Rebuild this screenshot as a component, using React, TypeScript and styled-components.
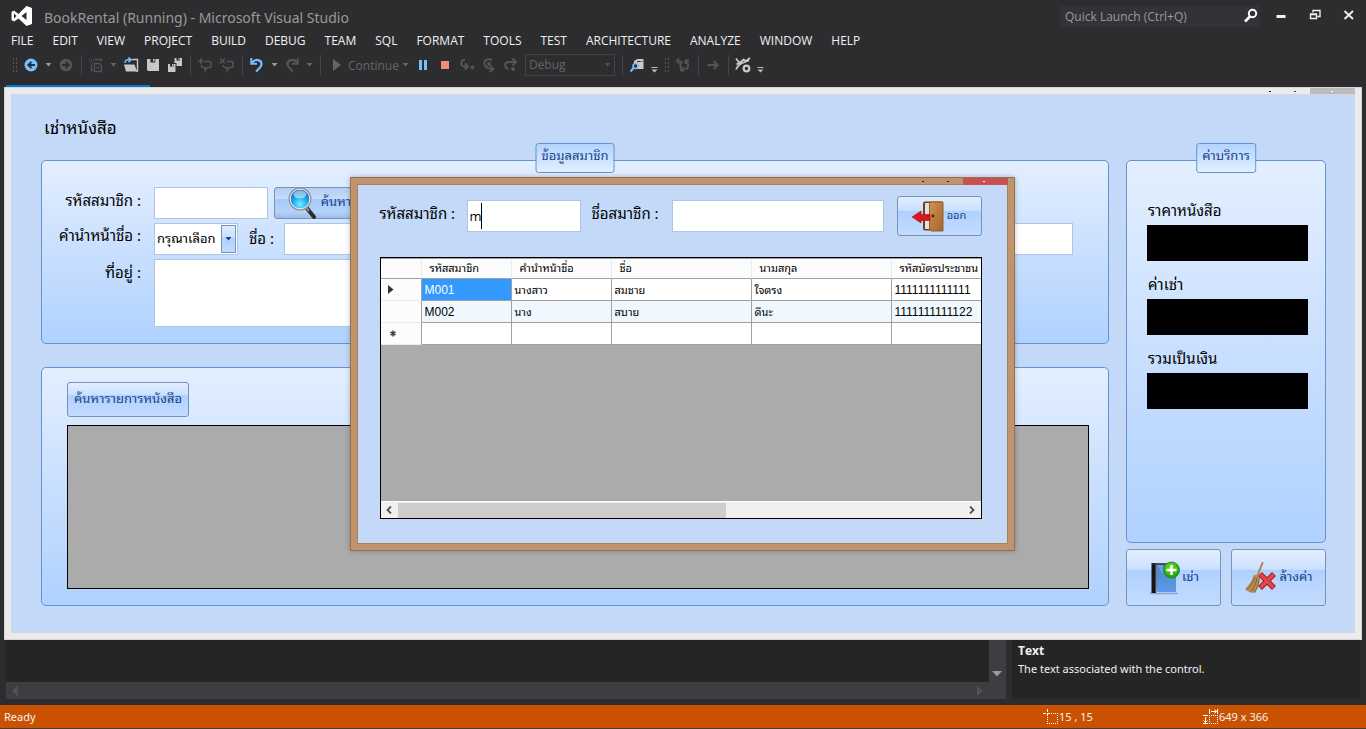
import React from 'react';
import styled, { createGlobalStyle, css } from 'styled-components';

const UI = '"Open Sans", "Noto Sans", sans-serif';
const UI_WIDE = '"Noto Sans", "Open Sans", sans-serif';
const THAI = '"Noto Sans Thai Looped", "Noto Sans Thai", "Loma", "Liberation Sans", sans-serif';
const NARROW = '"Liberation Sans Narrow", "Liberation Sans", sans-serif';

const GlobalStyle = createGlobalStyle`
  * { box-sizing: border-box; }
  body { margin: 0; background: #2d2d30; font-family: ${UI}; }
  button, input, select, textarea { font: inherit; margin: 0; }
`;

/* ---------- IDE shell ---------- */

const Shell = styled.div`
  display: flex;
  flex-direction: column;
  min-height: 100vh;
  background: #2d2d30;
  color: #f1f1f1;
  overflow: hidden;
`;

const TitleBar = styled.header`
  display: flex;
  align-items: center;
  height: 32px;
  padding: 0 9px 0 11px;
  gap: 12px;
`;

const AppTitle = styled.h1`
  flex: 1;
  margin: 0;
  padding-top: 3px;
  font-family: ${UI_WIDE};
  font-size: 14px;
  font-weight: 400;
  line-height: 20px;
  color: #999;
  white-space: nowrap;
`;

const QuickLaunch = styled.label`
  display: flex;
  align-items: center;
  width: 200px;
  height: 21px;
  padding: 0 1px 0 5px;
  background: #333337;
`;

const QuickInput = styled.input`
  flex: 1;
  min-width: 0;
  padding: 0;
  border: 0;
  outline: 0;
  background: transparent;
  font-size: 12px;
  color: #999;
  &::placeholder { color: #999; opacity: 1; }
`;

const CaptionButtons = styled.div`
  display: flex;
  gap: 18px;
  padding-left: 1px;
  padding-bottom: 2px;
`;

const PlainButton = styled.button`
  display: flex;
  align-items: center;
  justify-content: center;
  padding: 0;
  border: 0;
  background: transparent;
  color: inherit;
`;

const CaptionButton = styled(PlainButton)`
  width: 16px;
  height: 16px;
`;

const MenuBar = styled.nav`
  display: flex;
  height: 19px;
  padding-left: 11px;
  gap: 19px;
`;

const MenuLink = styled.a`
  font-size: 12px;
  line-height: 18px;
  color: #f1f1f1;
  text-decoration: none;
  white-space: nowrap;
`;

const Toolbar = styled.div`
  display: flex;
  align-items: center;
  height: 28px;
  padding-left: 9px;
`;

const ToolButton = styled(PlainButton)`
  width: 22px;
  height: 22px;
`;

const DropButton = styled(PlainButton)`
  width: 13px;
  height: 22px;
`;

const ContinueButton = styled(PlainButton)`
  height: 22px;
  padding-left: 4px;
  gap: 4px;
  font-size: 12px;
  color: #656565;
`;

const Grip = styled.i`
  width: 5px;
  height: 17px;
  margin: 0 3px;
  background-image: radial-gradient(#55555a 1px, transparent 1px);
  background-size: 3px 4px;
`;

const Separator = styled.i`
  width: 8px;
  height: 20px;
  background: linear-gradient(#46464a, #46464a) 4px 0 / 1px 100% no-repeat;
`;

const ConfigSelect = styled.select`
  width: 90px;
  height: 22px;
  margin: 0 3px;
  padding: 0 3px;
  appearance: none;
  border: 1px solid #434346;
  border-radius: 0;
  background: #2d2d30;
  font-size: 12px;
  line-height: 18px;
  color: #656565;
`;

const SelectWrap = styled.div`
  display: flex;
  align-items: center;
  position: relative;
`;

const SelectArrow = styled.span`
  position: absolute;
  right: 7px;
  display: flex;
  pointer-events: none;
`;

const TabStrip = styled.div`
  height: 8px;
  padding: 6px 6px 0;
`;

const ActiveTab = styled.div`
  width: 144px;
  height: 2px;
  background: #007acc;
`;

/* ---------- running form ---------- */

const FormWindow = styled.section`
  position: relative;
  display: flex;
  flex: 1;
  flex-direction: column;
  margin: 0 4px;
  padding: 0 6px 6px;
  border: 1px solid #d6d6d6;
  background: #ebebeb;
  color: #000;
  font-family: ${THAI};
`;

const MiniCaption = styled.div`
  display: flex;
  justify-content: flex-end;
  height: 6px;
`;

const MiniButton = styled.button<{ $bg?: string; $mark: string; $wide?: boolean }>`
  display: flex;
  align-items: center;
  justify-content: center;
  width: ${(p) => (p.$wide ? 45 : 25)}px;
  height: 7px;
  padding: ${(p) => (p.$wide ? '0 2px 0 0' : '0 5px 0 0')};
  border: 0;
  background: ${(p) => p.$bg ?? 'transparent'};
  &::after {
    content: '';
    width: 2px;
    height: 1px;
    background: ${(p) => p.$mark};
  }
`;

const FormBody = styled.div`
  display: flex;
  flex: 1;
  flex-direction: column;
  padding: 0 28px 26px 29px;
  border: 1px solid #d3d8e0;
  background: #c3d9f7;
`;

const FormTitle = styled.h2`
  margin: 0;
  padding: 0 0 2px 3px;
  font-size: 17px;
  font-weight: 400;
  line-height: 63px;
`;

const Columns = styled.div`
  display: grid;
  flex: 1;
  grid-template-columns: minmax(0, 1fr) 200px;
  gap: 17px;
`;

const Column = styled.div<{ $gap: number }>`
  display: flex;
  flex-direction: column;
  gap: ${(p) => p.$gap}px;
`;

const Group = styled.section<{ $pad: string; $grow?: boolean }>`
  position: relative;
  display: flex;
  flex-direction: column;
  flex: ${(p) => (p.$grow ? '1' : 'none')};
  padding: ${(p) => p.$pad};
  border: 1px solid #6593cf;
  border-radius: 5px;
  background: linear-gradient(#e3efff, #c9dffe 50%, #afd2ff);
`;

const GroupCaption = styled.h3`
  position: absolute;
  top: -18px;
  left: 50%;
  transform: translateX(-50%);
  height: 30px;
  margin: 0;
  padding: 0 5px;
  border: 1px solid #6593cf;
  border-radius: 3px;
  background: linear-gradient(#b2d4ff, #e3efff);
  font-size: 13px;
  font-weight: 400;
  line-height: 22px;
  color: #15428b;
  white-space: nowrap;
`;

const FormRow = styled.div<{ $h: number }>`
  display: grid;
  grid-template-columns: 99px minmax(0, 1fr);
  gap: 13px;
  height: ${(p) => p.$h}px;
`;

const Rows = styled.div`
  display: flex;
  flex-direction: column;
  gap: 3px;
`;

const Label = styled.label<{ $right?: boolean }>`
  font-size: 15px;
  line-height: 24px;
  white-space: nowrap;
  text-align: ${(p) => (p.$right ? 'right' : 'left')};
`;

const Controls = styled.div`
  display: flex;
  min-width: 0;
  gap: 6px;
`;

const boxed = css`
  border: 1px solid #abc7e8;
  border-radius: 0;
  background: #fff;
  outline: 0;
  color: #000;
`;

const Field = styled.input<{ $w: number }>`
  ${boxed}
  width: ${(p) => p.$w}px;
  height: 32px;
  padding: 0 2px;
  font-family: ${UI};
  font-size: 13px;
`;

const AddressBox = styled.textarea`
  ${boxed}
  width: 500px;
  height: 68px;
  resize: none;
`;

const PrefixSelect = styled.select`
  ${boxed}
  appearance: none;
  width: 84px;
  height: 32px;
  padding: 0 2px 4px;
  font-size: 13px;
`;

const PrefixArrow = styled.span`
  position: absolute;
  top: 2px;
  right: 2px;
  display: flex;
  align-items: center;
  justify-content: center;
  width: 15px;
  height: 28px;
  border: 1px solid #7793b9;
  background: linear-gradient(#dfebff, #c8dffe 45%, #afd1ff 46%, #c0dbff);
  pointer-events: none;
`;

const NameControls = styled.div`
  display: flex;
  align-items: center;
  min-width: 0;
`;

const NameLabel = styled(Label)`
  width: 46px;
  padding: 0 0 4px 11px;
`;

const Spacer = styled.div`
  flex: 1;
`;

const GlossButton = styled.button<{ $w: number; $h: number; $size: number; $hot?: boolean }>`
  display: flex;
  flex: none;
  align-items: center;
  justify-content: center;
  gap: 2px;
  width: ${(p) => p.$w}px;
  height: ${(p) => p.$h}px;
  padding: 0;
  border: 1px solid #7793b9;
  border-radius: 3px;
  background: ${(p) =>
    p.$hot
      ? 'linear-gradient(#b4cdf0, #c5dcfb 35%, #a6caf8 36%, #b4d3fb 80%, #9dbce6)'
      : 'linear-gradient(#e3eeff, #cbe1ff 35%, #afd1ff 37%, #c3dcff)'};
  font-size: ${(p) => p.$size}px;
  line-height: 20px;
  color: #15428b;
  white-space: nowrap;
`;

const ButtonText = styled.span`
  padding-bottom: 4px;
`;

const GridArea = styled.div`
  flex: 1;
  margin-top: 8px;
  border: 1px solid #000;
  background: #ababab;
`;

const Amount = styled.div`
  display: flex;
  flex-direction: column;
`;

const AmountLabel = styled.label`
  height: 38px;
  padding: 10px 0 0 1px;
  font-size: 15px;
  line-height: 24px;
`;

const AmountBox = styled.input`
  width: 161px;
  height: 36px;
  border: 0;
  background: #000;
  color: #fff;
`;

const Actions = styled.div`
  display: flex;
  justify-content: space-between;
`;

/* ---------- member search dialog ---------- */

const DialogLayer = styled.div`
  position: absolute;
  inset: 89px 2px auto 0;
  display: flex;
  justify-content: center;
`;

const Dialog = styled.section`
  width: 665px;
  padding: 0 6px 6px;
  border: 1px solid #94704e;
  background: #c0946c;
  box-shadow: 0 0 5px rgba(0, 0, 0, 0.25);
`;

const DialogBody = styled.div`
  padding: 11px 25px 24px 22px;
  border: 1px solid #a9805c;
  background: #c3d9f7;
`;

const SearchRow = styled.div`
  display: flex;
  height: 40px;
  margin-bottom: 21px;
`;

const SearchLabel = styled(Label)<{ $w: number }>`
  width: ${(p) => p.$w}px;
  padding-top: 4px;
`;

const NameSearchLabel = styled(SearchLabel)`
  padding-left: 11px;
`;

const FieldWrap = styled.div`
  position: relative;
  padding-top: 4px;
`;

const TextCaret = styled.i`
  position: absolute;
  top: 7px;
  left: 14px;
  width: 1px;
  height: 26px;
  background: #000;
`;

const GridBox = styled.div`
  display: flex;
  flex-direction: column;
  height: 262px;
  border: 1px solid #000;
  background: #ababab;
  overflow: hidden;
`;

const GridView = styled.div`
  flex: 1;
  overflow: hidden;
`;

const Table = styled.table`
  width: 661px;
  table-layout: fixed;
  border-collapse: separate;
  border-spacing: 0;
  border-top: 1px solid #a0a0a0;
  font-size: 11px;
`;

const HeadCell = styled.th`
  height: 20px;
  padding: 0 0 2px 8px;
  border-right: 1px solid #e3edf9;
  border-bottom: 1px solid #a0a0a0;
  background: #fcfcfc;
  font-weight: 400;
  line-height: 17px;
  text-align: left;
  white-space: nowrap;
`;

const RowHead = styled.th`
  height: 22px;
  padding: 0 0 0 7px;
  border-right: 1px solid #a0a0a0;
  border-bottom: 1px solid #e3edf9;
  background: #fcfcfc;
  color: #333;
`;

const RowMark = styled.span`
  display: flex;
`;

const Cell = styled.td<{ $alt?: boolean; $selected?: boolean; $latin?: boolean }>`
  height: 22px;
  padding: ${(p) => (p.$latin ? '0 0 0 3px' : '0 0 2px 3px')};
  border-right: 1px solid #a0a0a0;
  border-bottom: 1px solid #a0a0a0;
  background: ${(p) => (p.$selected ? '#3399ff' : p.$alt ? '#f0f8ff' : '#fff')};
  color: ${(p) => (p.$selected ? '#fff' : '#000')};
  font-family: ${(p) => (p.$latin ? NARROW : THAI)};
  font-size: ${(p) => (p.$latin ? 12 : 11)}px;
  line-height: 18px;
  white-space: nowrap;
`;

const ScrollTrack = styled.div`
  display: flex;
  align-items: center;
  height: 17px;
  border-top: 1px solid #fff;
  background: #f0f0f0;
`;

const ScrollButton = styled(PlainButton)`
  width: 17px;
  height: 16px;
`;

const ScrollThumb = styled.div`
  width: 328px;
  height: 15px;
  background: #cdcdcd;
`;

/* ---------- bottom panels and status ---------- */

const Panels = styled.div`
  display: grid;
  grid-template-columns: minmax(0, 1fr) 348px;
  gap: 6px;
  height: 59px;
  margin: 0 6px 6px;
`;

const OutputPanel = styled.div`
  display: grid;
  grid-template-columns: 1fr 17px;
  grid-template-rows: 1fr 17px;
  background: #252526;
`;

const DarkBar = styled.div<{ $side?: boolean }>`
  display: flex;
  justify-content: space-between;
  align-items: ${(p) => (p.$side ? 'flex-end' : 'center')};
  padding: ${(p) => (p.$side ? '0 3px 5px' : '0 6px')};
  background: #3e3e42;
`;

const HelpPanel = styled.div`
  padding: 2px 6px;
  background: #252526;
  font-family: ${UI_WIDE};
  font-size: 11px;
  line-height: 18px;
`;

const HelpTitle = styled.strong`
  display: block;
  font-family: ${UI};
  font-size: 12px;
`;

const StatusBar = styled.footer`
  display: flex;
  align-items: center;
  height: 24px;
  padding: 0 3px 0 4px;
  border-bottom: 1px solid #4a3a33;
  background: #ca5100;
  font-family: ${UI_WIDE};
  font-size: 11px;
`;

const StatusCell = styled.span<{ $w?: number }>`
  display: flex;
  align-items: center;
  width: ${(p) => (p.$w ? `${p.$w}px` : 'auto')};
  white-space: nowrap;
`;

/* ---------- icons ---------- */

const Caret = ({ color = '#999' }: { color?: string }) => (
  <svg width="7" height="4" viewBox="0 0 7 4"><path d="M.5 0h6L3.5 3.5z" fill={color} /></svg>
);

const Overflow = () => (
  <svg width="7" height="16" viewBox="0 0 7 16"><path d="M.5 10h6v1h-6zM.5 12.500h6l-3 3z" fill="#bbb" /></svg>
);

const Svg = ({ children, size = 16 }: { children: React.ReactNode; size?: number }) => (
  <svg width={size} height={size} viewBox="0 0 16 16" fill="none">{children}</svg>
);

const DIM = '#555558';
const LIT = '#c8c8c8';

const LogoIcon = () => (
  <svg width="21" height="20" viewBox="0 0 21 20">
    <path
      fill="#fff"
      fillRule="evenodd"
      d="M15.500 0 21 2v16l-5.500 2-8-7.500L3 15.500.500 14V6L3 4.500 7.500 8zM3 7.500v5L5.500 10zM15.500 6l-5 4 5 4z"
    />
  </svg>
);

const SearchIcon = () => (
  <Svg>
    <circle cx="9.500" cy="5.500" r="3.700" stroke="#fff" strokeWidth="2" />
    <path d="M7 8.500 2 13.500" stroke="#fff" strokeWidth="2.600" />
  </Svg>
);

const BackIcon = () => (
  <Svg>
    <circle cx="8" cy="8" r="6.500" fill="#75bfff" />
    <path d="M12 8H5.500M8.500 4.800 5.200 8l3.300 3.200" stroke="#2d2d30" strokeWidth="1.800" />
  </Svg>
);

const ForwardIcon = () => (
  <Svg>
    <circle cx="8" cy="8" r="6.300" fill={DIM} />
    <path d="M4 8h6.500M7.500 4.800 10.800 8l-3.300 3.200" stroke="#2d2d30" strokeWidth="1.800" />
  </Svg>
);

const NewIcon = () => (
  <Svg>
    <path d="M1 2h5M1 4h5M2 6h3" stroke={DIM} strokeDasharray="1 1" />
    <path d="M7 2.500h6.500v2M3.500 7v6.500h2M6.500 6.500h5l2 2v6h-7zM8.500 10.500h3" stroke={DIM} strokeWidth="1.300" />
  </Svg>
);

const OpenIcon = () => (
  <Svg>
    <path d="M9 2.500h5.500V14H13" stroke={LIT} strokeWidth="1.400" />
    <path d="M1 7.500h10.500L14 14.500H3z" fill={LIT} />
    <path d="M2 6C2 3 4 2.300 7 2.700M5.500.5 8 2.800 5.500 5.300" stroke="#75bfff" strokeWidth="1.600" />
  </Svg>
);

const SaveIcon = () => (
  <Svg>
    <path d="M2 2h12v12H3l-1-1z" fill={LIT} />
    <path d="M5.500 2h4.800v3.500H5.500z" fill="#2d2d30" />
    <path d="M8 2h1.500v2.500H8z" fill={LIT} />
  </Svg>
);

const SaveAllIcon = () => (
  <Svg>
    <path d="M7.500 1H15v8H7.500zM1 7h7.500v8H1z" fill={LIT} />
    <path d="M9.500 1h3.500v2.500H9.500zM3 7h3.500v2.500H3z" fill="#2d2d30" />
    <path d="M11.500 1h1v1.800h-1zM5 7h1v1.800H5z" fill={LIT} />
    <path d="M9 6v3.500M6 6.500h3" stroke="#2d2d30" />
  </Svg>
);

const CommentIcon = ({ remove }: { remove?: boolean }) => (
  <Svg>
    <path d="M7.500 4.500H13l1 1v4l-1 1h-2.500L8 13.500v-3H5.500l-1-1V8" stroke={DIM} strokeWidth="1.500" />
    <path d={remove ? 'M1 1.500 6 6.500M6 1.500 1 6.500' : 'M1 4h5.500M3.750 1.300v5.500'} stroke={DIM} strokeWidth="1.500" />
  </Svg>
);

const UndoIcon = ({ redo }: { redo?: boolean }) => (
  <Svg>
    <g transform={redo ? 'matrix(-1 0 0 1 16 0)' : undefined} stroke={redo ? DIM : '#75bfff'}>
      <path d="M3 5.500C6 1.500 12.500 2.500 12.500 7c0 3-2.500 4.500-5.500 7.500" strokeWidth="2.200" />
      <path d="M2.300 1v5.700H8" strokeWidth="2" />
    </g>
  </Svg>
);

const StepIcon = ({ kind }: { kind: 'into' | 'over' | 'out' }) => (
  <Svg>
    {kind === 'into' && (
      <>
        <path d="M6 2.500C1 3 1 9.500 5.500 9.500H8M6 6.500l3 3-3 3" stroke={DIM} strokeWidth="1.900" />
        <circle cx="13.500" cy="10.500" r="1.900" fill={DIM} />
      </>
    )}
    {kind === 'over' && (
      <>
        <path d="M11 3C5 .5 2 5 4 8.500c1.500 2.500 4 3.500 8 3.500M9.500 8.500l3 3.500-4 3" stroke={DIM} strokeWidth="1.900" />
        <circle cx="8" cy="7" r="1.900" fill={DIM} />
      </>
    )}
    {kind === 'out' && (
      <>
        <path d="M5.500 12C1 11 1 5 6 5h6.500M9.500 1.500 13 5 9.500 8.500" stroke={DIM} strokeWidth="1.900" />
        <circle cx="10" cy="12" r="1.900" fill={DIM} />
      </>
    )}
  </Svg>
);

const FindFolderIcon = () => (
  <Svg>
    <path d="M5 4 8.500 2h6v10H9L5 9z" fill={LIT} />
    <path d="M8 4.500h3.500M12.500 4.500h1" stroke="#2d2d30" />
    <circle cx="6.500" cy="9" r="2.500" fill="#2d2d30" stroke="#75bfff" strokeWidth="1.700" />
    <path d="M4.500 11 1.500 14.500" stroke="#75bfff" strokeWidth="2" />
  </Svg>
);

const RefreshIcon = () => (
  <Svg>
    <path d="M4 1 1.500 4H5L2.500 7" stroke={DIM} strokeWidth="1.300" />
    <path d="M7.500 4.500c-3 1.500-3 6.500 0 8M5 13.500h3.500V10M10.500 12.500c3.500-1.500 3.500-6.500 0-8M14 3.500h-3.500V7" stroke={DIM} strokeWidth="1.900" />
  </Svg>
);

const GearLinesIcon = () => (
  <Svg>
    <path d="M1 1.500 4.500 6l4-3.500L11 4l4-3M1 12.500C3 7 7 6 14 3.500M1.500 7.500 5 5" stroke={LIT} strokeWidth="1.700" />
    <circle cx="11.500" cy="11.500" r="2.800" stroke={LIT} strokeWidth="2.200" />
  </Svg>
);

const MagnifierIcon = () => (
  <svg width="32" height="32" viewBox="0 0 32 32">
    <defs>
      <radialGradient id="lens" cx="50%" cy="75%" r="75%">
        <stop offset="0" stopColor="#6ff0ff" />
        <stop offset=".5" stopColor="#1fa5ea" />
        <stop offset="1" stopColor="#0b56b4" />
      </radialGradient>
    </defs>
    <path d="M19 20 27 30" stroke="#2c2c2c" strokeWidth="4" strokeLinecap="round" />
    <path d="M18 19l4 5" stroke="#999" strokeWidth="2" />
    <circle cx="13" cy="12" r="10.500" fill="url(#lens)" stroke="#8d969c" strokeWidth="2" />
    <circle cx="13" cy="12" r="9.800" fill="none" stroke="#e8f2f6" />
    <ellipse cx="13" cy="7.500" rx="6.500" ry="4" fill="#fff" opacity=".5" />
  </svg>
);

const DoorIcon = () => (
  <svg width="33" height="32" viewBox="0 0 33 32">
    <defs>
      <linearGradient id="door" x1="0" y1="0" x2="1" y2="1">
        <stop offset="0" stopColor="#cf9350" />
        <stop offset="1" stopColor="#a5652c" />
      </linearGradient>
    </defs>
    <rect x="11" y="1.500" width="20" height="29" rx="2" fill="#7b3d14" />
    <rect x="13" y="3" width="6" height="26" fill="#d7e3ea" />
    <path d="M17.500 3.500 19 2h12v29H19l-1.500-2z" fill="url(#door)" stroke="#9a5a28" />
    <circle cx="21" cy="16" r="1.400" fill="#4d1d08" />
    <path d="M0 17 9 11v3.500h9v6H9V23z" fill="#d8181c" stroke="#a90d10" strokeWidth=".6" />
  </svg>
);

const BookIcon = () => (
  <svg width="32" height="34" viewBox="0 0 32 34">
    <defs>
      <linearGradient id="book" x1="0" y1="0" x2="0" y2="1">
        <stop offset="0" stopColor="#4a83c9" />
        <stop offset="1" stopColor="#5f9be8" />
      </linearGradient>
      <radialGradient id="plus" cx="45%" cy="35%" r="65%">
        <stop offset="0" stopColor="#7ee02b" />
        <stop offset="1" stopColor="#159b10" />
      </radialGradient>
    </defs>
    <path d="M2 32.500h28" stroke="#8aa5cc" strokeWidth="1.500" />
    <path d="M4 2.500h24V31H9z" fill="url(#book)" />
    <path d="M3.500 2H8v30H3.500z" fill="#151515" />
    <path d="M8 3.500V31" stroke="#777" />
    <path d="M4 3h20" stroke="#333" strokeWidth="1.500" />
    <path d="M9 4l6 10V4z" fill="#8db8ef" opacity=".5" />
    <circle cx="23.500" cy="9" r="8" fill="url(#plus)" stroke="#0f8a12" strokeWidth=".8" />
    <path d="M23.500 4v10M18.500 9h10" stroke="#fff" strokeWidth="2.400" />
  </svg>
);

const BroomIcon = () => (
  <svg width="33" height="32" viewBox="0 0 33 32">
    <path d="M18.500 1 12 17" stroke="#b58a57" strokeWidth="2" strokeLinecap="round" />
    <path d="M10 12.500 16 15c-.5 6-2 11-5 16-4 0-7-1-10-4 4-4 7-8 9-14.500z" fill="#b68c56" />
    <path d="M11 15C9 20 7 24 3 27.500M13 16c-1 5-3 10-6 13.500M15 17c0 5-2 9-4.500 13" fill="none" stroke="#7f5a2e" strokeWidth=".9" />
    <path d="M16 12 30 26M30 12 16 26" stroke="#b3171c" strokeWidth="5.500" />
    <path d="M16.500 12.500 29.500 25.500M29.500 12.500 16.500 25.500" stroke="#e0474a" strokeWidth="3.500" />
  </svg>
);

const PositionIcon = () => (
  <Svg>
    <path d="M4 4.500h11M4 14.500h11M4.500 4v11M14.500 4v11" stroke="#fff" strokeDasharray="1 1" />
    <path d="M0 4.500h3M5 4.500h2M4.500 0v3M4.500 5v2" stroke="#fff" />
  </Svg>
);

const SizeIcon = () => (
  <Svg>
    <path d="M6 6.500h9M6 14.500h9M6.500 6v9M14.500 6v9" stroke="#fff" strokeDasharray="1 1" />
    <path d="M6.500 0v5M14.500 0v5M8 2.500h6M11.500.5l2 2-2 2M0 6.500h5M0 14.500h5M2.500 8v6M.5 11.500l2 2 2-2" stroke="#fff" />
  </Svg>
);

/* ---------- data ---------- */

const MENU = ['FILE', 'EDIT', 'VIEW', 'PROJECT', 'BUILD', 'DEBUG', 'TEAM', 'SQL', 'FORMAT', 'TOOLS', 'TEST', 'ARCHITECTURE', 'ANALYZE', 'WINDOW', 'HELP'];

const COLUMNS = ['รหัสสมาชิก', 'คำนำหน้าชื่อ', 'ชื่อ', 'นามสกุล', 'รหัสบัตรประชาชน'];
const COLUMN_WIDTHS = [41, 90, 100, 140, 140, 150];

const MEMBERS = [
  ['M001', 'นางสาว', 'สมชาย', 'ใจตรง', '1111111111111'],
  ['M002', 'นาง', 'สบาย', 'ดีนะ', '1111111111122'],
];

const AMOUNTS = [
  { id: 'price', label: 'ราคาหนังสือ' },
  { id: 'fee', label: 'ค่าเช่า' },
  { id: 'total', label: 'รวมเป็นเงิน' },
];

/* ---------- composition ---------- */

const IdeToolbar = () => (
  <Toolbar role="toolbar">
    <Grip />
    <ToolButton aria-label="Back"><BackIcon /></ToolButton>
    <DropButton aria-label="Back history"><Caret /></DropButton>
    <ToolButton aria-label="Forward"><ForwardIcon /></ToolButton>
    <Separator />
    <ToolButton aria-label="New project"><NewIcon /></ToolButton>
    <DropButton aria-label="New options"><Caret color="#656565" /></DropButton>
    <ToolButton aria-label="Open"><OpenIcon /></ToolButton>
    <ToolButton aria-label="Save"><SaveIcon /></ToolButton>
    <ToolButton aria-label="Save all"><SaveAllIcon /></ToolButton>
    <Separator />
    <ToolButton aria-label="Comment"><CommentIcon /></ToolButton>
    <ToolButton aria-label="Uncomment"><CommentIcon remove /></ToolButton>
    <Separator />
    <ToolButton aria-label="Undo"><UndoIcon /></ToolButton>
    <DropButton aria-label="Undo history"><Caret /></DropButton>
    <ToolButton aria-label="Redo"><UndoIcon redo /></ToolButton>
    <DropButton aria-label="Redo history"><Caret color="#656565" /></DropButton>
    <Separator />
    <ContinueButton>
      <Svg><path d="M5 2 13 8l-8 6z" fill="#656565" /></Svg>
      Continue
    </ContinueButton>
    <DropButton aria-label="Continue options"><Caret color="#656565" /></DropButton>
    <ToolButton aria-label="Break all"><Svg><path d="M4 3h3v10H4zM9 3h3v10H9z" fill="#75bfff" /></Svg></ToolButton>
    <ToolButton aria-label="Stop"><Svg><path d="M4 4h8v8H4z" fill="#f38b76" /></Svg></ToolButton>
    <ToolButton aria-label="Step into"><StepIcon kind="into" /></ToolButton>
    <ToolButton aria-label="Step over"><StepIcon kind="over" /></ToolButton>
    <ToolButton aria-label="Step out"><StepIcon kind="out" /></ToolButton>
    <SelectWrap>
      <ConfigSelect aria-label="Configuration"><option>Debug</option></ConfigSelect>
      <SelectArrow><Caret color="#505053" /></SelectArrow>
    </SelectWrap>
    <Separator />
    <ToolButton aria-label="Find in files"><FindFolderIcon /></ToolButton>
    <DropButton aria-label="More"><Overflow /></DropButton>
    <Grip />
    <ToolButton aria-label="Refresh"><RefreshIcon /></ToolButton>
    <Separator />
    <ToolButton aria-label="Go"><Svg><path d="M2.500 8h10M8.500 4l4.200 4-4.200 4" stroke={DIM} strokeWidth="1.900" /></Svg></ToolButton>
    <Separator />
    <ToolButton aria-label="Analyze"><GearLinesIcon /></ToolButton>
    <DropButton aria-label="More tools"><Overflow /></DropButton>
  </Toolbar>
);

const RentalForm = () => (
  <FormBody>
    <FormTitle>เช่าหนังสือ</FormTitle>
    <Columns>
      <Column $gap={23}>
        <Group $pad="26px 35px 16px 0">
          <GroupCaption>ข้อมูลสมาชิก</GroupCaption>
          <Rows>
            <FormRow $h={32}>
              <Label $right htmlFor="member">รหัสสมาชิก :</Label>
              <Controls>
                <Field id="member" $w={114} />
                <GlossButton $hot $w={90} $h={32} $size={13}><MagnifierIcon /><ButtonText>ค้นหา</ButtonText></GlossButton>
              </Controls>
            </FormRow>
            <FormRow $h={34}>
              <Label $right htmlFor="prefix">คำนำหน้าชื่อ :</Label>
              <NameControls>
                <SelectWrap>
                  <PrefixSelect id="prefix"><option>กรุณาเลือก</option></PrefixSelect>
                  <PrefixArrow><Caret color="#15428b" /></PrefixArrow>
                </SelectWrap>
                <NameLabel htmlFor="first">ชื่อ :</NameLabel>
                <Field id="first" $w={200} />
                <Spacer />
                <Field aria-label="นามสกุล" $w={200} />
              </NameControls>
            </FormRow>
            <FormRow $h={68}>
              <Label $right htmlFor="address">ที่อยู่ :</Label>
              <AddressBox id="address" />
            </FormRow>
          </Rows>
        </Group>
        <Group $grow $pad="14px 19px 16px 25px">
          <GlossButton $w={122} $h={35} $size={13}><ButtonText>ค้นหารายการหนังสือ</ButtonText></GlossButton>
          <GridArea />
        </Group>
      </Column>
      <Column $gap={6}>
        <Group $grow $pad="26px 0 0 20px">
          <GroupCaption>ค่าบริการ</GroupCaption>
          {AMOUNTS.map((a) => (
            <Amount key={a.id}>
              <AmountLabel htmlFor={a.id}>{a.label}</AmountLabel>
              <AmountBox id={a.id} readOnly />
            </Amount>
          ))}
        </Group>
        <Actions>
          <GlossButton $w={95} $h={57} $size={13}><BookIcon /><ButtonText>เช่า</ButtonText></GlossButton>
          <GlossButton $w={95} $h={57} $size={13}><BroomIcon /><ButtonText>ล้างค่า</ButtonText></GlossButton>
        </Actions>
      </Column>
    </Columns>
  </FormBody>
);

const MemberTable = () => (
  <Table>
    <colgroup>
      {COLUMN_WIDTHS.map((w, i) => <col key={i} width={w} />)}
    </colgroup>
    <thead>
      <tr>
        <HeadCell aria-label="row" />
        {COLUMNS.map((c) => <HeadCell key={c}>{c}</HeadCell>)}
      </tr>
    </thead>
    <tbody>
      {MEMBERS.map((row, r) => (
        <tr key={row[0]}>
          <RowHead>
            {r === 0 && (
              <RowMark><svg width="6" height="9" viewBox="0 0 6 9"><path d="M0 0l5.500 4.500L0 9z" fill="#333" /></svg></RowMark>
            )}
          </RowHead>
          {row.map((v, c) => (
            <Cell key={c} $alt={r === 1} $selected={r === 0 && c === 0} $latin={c === 0 || c === 4}>{v}</Cell>
          ))}
        </tr>
      ))}
      <tr>
        <RowHead>
          <RowMark><svg width="10" height="7" viewBox="0 0 10 7"><path d="M5 .5v6M2.500 2l5 3M7.500 2l-5 3" stroke="#444" strokeWidth="1.500" /></svg></RowMark>
        </RowHead>
        {COLUMNS.map((c) => <Cell key={c} />)}
      </tr>
    </tbody>
  </Table>
);

const MemberDialog = () => (
  <DialogLayer>
    <Dialog role="dialog" aria-label="สมาชิก">
      <MiniCaption>
        <MiniButton aria-label="Minimize" $mark="#222" />
        <MiniButton aria-label="Maximize" $mark="#222" />
        <MiniButton aria-label="Close" $wide $bg="#c75050" $mark="#fff" />
      </MiniCaption>
      <DialogBody>
        <SearchRow>
          <SearchLabel $w={87} htmlFor="code">รหัสสมาชิก :</SearchLabel>
          <FieldWrap>
            <Field id="code" $w={114} defaultValue="m" />
            <TextCaret />
          </FieldWrap>
          <NameSearchLabel $w={91} htmlFor="name">ชื่อสมาชิก :</NameSearchLabel>
          <FieldWrap><Field id="name" $w={212} /></FieldWrap>
          <Spacer />
          <GlossButton $w={85} $h={40} $size={11}><DoorIcon /><ButtonText>ออก</ButtonText></GlossButton>
        </SearchRow>
        <GridBox>
          <GridView><MemberTable /></GridView>
          <ScrollTrack>
            <ScrollButton aria-label="Scroll left">
              <svg width="6" height="8" viewBox="0 0 6 8"><path d="M5 .5 1.500 4 5 7.500" fill="none" stroke="#505050" strokeWidth="1.800" /></svg>
            </ScrollButton>
            <ScrollThumb />
            <Spacer />
            <ScrollButton aria-label="Scroll right">
              <svg width="6" height="8" viewBox="0 0 6 8"><path d="M1 .5 4.500 4 1 7.500" fill="none" stroke="#505050" strokeWidth="1.800" /></svg>
            </ScrollButton>
          </ScrollTrack>
        </GridBox>
      </DialogBody>
    </Dialog>
  </DialogLayer>
);

export default function App() {
  return (
    <Shell>
      <GlobalStyle />
      <TitleBar>
        <LogoIcon />
        <AppTitle>BookRental (Running) - Microsoft Visual Studio</AppTitle>
        <QuickLaunch>
          <QuickInput aria-label="Quick Launch" placeholder="Quick Launch (Ctrl+Q)" />
          <SearchIcon />
        </QuickLaunch>
        <CaptionButtons>
          <CaptionButton aria-label="Minimize"><Svg><path d="M3.500 8h9v3h-9z" fill="#f1f1f1" /></Svg></CaptionButton>
          <CaptionButton aria-label="Restore">
            <Svg><path d="M6 5.500V3.500h7v6h-2.500M3.500 7.500h6v4h-6zM3 7h7M6 3.500h7.500" stroke="#f1f1f1" strokeWidth="1.400" /></Svg>
          </CaptionButton>
          <CaptionButton aria-label="Close"><Svg><path d="M3.500 4 12 12M12 4 3.500 12" stroke="#f1f1f1" strokeWidth="1.800" /></Svg></CaptionButton>
        </CaptionButtons>
      </TitleBar>
      <MenuBar>
        {MENU.map((m) => <MenuLink key={m} href="#">{m}</MenuLink>)}
      </MenuBar>
      <IdeToolbar />
      <TabStrip><ActiveTab /></TabStrip>
      <FormWindow>
        <MiniCaption>
          <MiniButton aria-label="Minimize" $mark="#222" />
          <MiniButton aria-label="Maximize" $mark="#444" />
          <MiniButton aria-label="Close" $wide $bg="#bcbcbc" $mark="#fff" />
        </MiniCaption>
        <RentalForm />
        <MemberDialog />
      </FormWindow>
      <Panels>
        <OutputPanel>
          <div />
          <DarkBar $side><svg width="11" height="6" viewBox="0 0 11 6"><path d="M0 0h10L5 5.500z" fill="#999" /></svg></DarkBar>
          <DarkBar>
            <svg width="6" height="10" viewBox="0 0 6 10"><path d="M5.500 0v10L0 5z" fill="#555558" /></svg>
            <svg width="6" height="10" viewBox="0 0 6 10"><path d="M0 0v10l5.500-5z" fill="#555558" /></svg>
          </DarkBar>
          <DarkBar />
        </OutputPanel>
        <HelpPanel>
          <HelpTitle>Text</HelpTitle>
          The text associated with the control.
        </HelpPanel>
      </Panels>
      <StatusBar>
        <StatusCell>Ready</StatusCell>
        <Spacer />
        <StatusCell $w={160}><PositionIcon />15 , 15</StatusCell>
        <StatusCell $w={160}><SizeIcon />649 x 366</StatusCell>
      </StatusBar>
    </Shell>
  );
}
